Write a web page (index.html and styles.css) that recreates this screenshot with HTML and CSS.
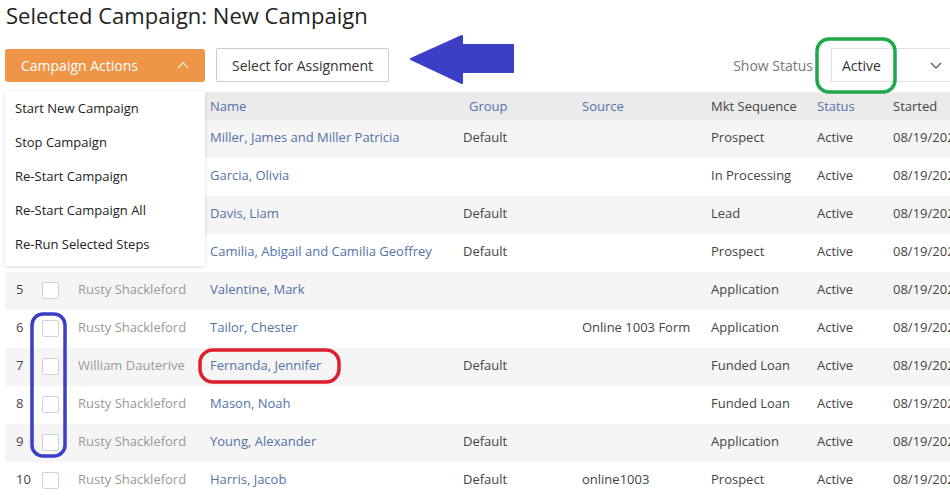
FILE: index.html
```html
<!DOCTYPE html>
<html lang="en">
<head>
  <meta charset="UTF-8">
  <title>Selected Campaign</title>
  <link rel="stylesheet" href="styles.css">
</head>
<body>
  <div class="page">
    <h1>Selected Campaign: New Campaign</h1>

    <div class="toolbar">
      <div class="actions">
        <button class="btn-orange">Campaign Actions
          <svg class="chev" width="12" height="8" viewBox="0 0 12 8"><path d="M1 7 L6 1.5 L11 7" fill="none" stroke="#fde3cc" stroke-width="1.3"/></svg>
        </button>
        <div class="menu">
          <div class="menu-item">Start New Campaign</div>
          <div class="menu-item">Stop Campaign</div>
          <div class="menu-item">Re-Start Campaign</div>
          <div class="menu-item">Re-Start Campaign All</div>
          <div class="menu-item">Re-Run Selected Steps</div>
        </div>
      </div>
      <button class="btn-plain">Select for Assignment</button>

      <div class="status-filter">
        <span class="label">Show Status</span>
        <div class="select">Active
          <svg width="12" height="7" viewBox="0 0 12 7"><path d="M1 1 L6 6 L11 1" fill="none" stroke="#555" stroke-width="1.2"/></svg>
        </div>
      </div>
    </div>

    <table class="grid">
      <colgroup>
        <col style="width:31px"><col style="width:34px"><col style="width:132px"><col style="width:253px">
        <col style="width:119px"><col style="width:129px"><col style="width:106px"><col style="width:76px"><col>
      </colgroup>
      <thead>
        <tr>
          <th></th><th></th><th></th>
          <th class="link">Name</th>
          <th class="link group-h">Group</th>
          <th class="link">Source</th>
          <th>Mkt Sequence</th>
          <th class="link">Status</th>
          <th>Started</th>
        </tr>
      </thead>
      <tbody>
        <tr><td class="num">1</td><td><span class="cb"></span></td><td class="who">Rusty Shackleford</td><td class="link">Miller, James and Miller Patricia</td><td>Default</td><td></td><td>Prospect</td><td>Active</td><td>08/19/2021</td></tr>
        <tr><td class="num">2</td><td><span class="cb"></span></td><td class="who">Rusty Shackleford</td><td class="link">Garcia, Olivia</td><td></td><td></td><td>In Processing</td><td>Active</td><td>08/19/2021</td></tr>
        <tr><td class="num">3</td><td><span class="cb"></span></td><td class="who">Rusty Shackleford</td><td class="link">Davis, Liam</td><td>Default</td><td></td><td>Lead</td><td>Active</td><td>08/19/2021</td></tr>
        <tr><td class="num">4</td><td><span class="cb"></span></td><td class="who">Rusty Shackleford</td><td class="link">Camilia, Abigail and Camilia Geoffrey</td><td>Default</td><td></td><td>Prospect</td><td>Active</td><td>08/19/2021</td></tr>
        <tr><td class="num">5</td><td><span class="cb"></span></td><td class="who">Rusty Shackleford</td><td class="link">Valentine, Mark</td><td></td><td></td><td>Application</td><td>Active</td><td>08/19/2021</td></tr>
        <tr><td class="num">6</td><td><span class="cb"></span></td><td class="who">Rusty Shackleford</td><td class="link">Tailor, Chester</td><td></td><td>Online 1003 Form</td><td>Application</td><td>Active</td><td>08/19/2021</td></tr>
        <tr><td class="num">7</td><td><span class="cb"></span></td><td class="who">William Dauterive</td><td class="link">Fernanda, Jennifer</td><td>Default</td><td></td><td>Funded Loan</td><td>Active</td><td>08/19/2021</td></tr>
        <tr><td class="num">8</td><td><span class="cb"></span></td><td class="who">Rusty Shackleford</td><td class="link">Mason, Noah</td><td></td><td></td><td>Funded Loan</td><td>Active</td><td>08/19/2021</td></tr>
        <tr><td class="num">9</td><td><span class="cb"></span></td><td class="who">Rusty Shackleford</td><td class="link">Young, Alexander</td><td>Default</td><td></td><td>Application</td><td>Active</td><td>08/19/2021</td></tr>
        <tr><td class="num">10</td><td><span class="cb"></span></td><td class="who">Rusty Shackleford</td><td class="link">Harris, Jacob</td><td>Default</td><td>online1003</td><td>Prospect</td><td>Active</td><td>08/19/2021</td></tr>
      </tbody>
    </table>
  </div>

  <!-- markup drawn on top of the screenshot -->
  <svg class="marks" width="950" height="500" viewBox="0 0 950 500">
    <path d="M411 59 L462 36 L462 45 L513 45 L513 72 L462 72 L462 83 Z" fill="#3a3fc6" stroke="#3a3fc6" stroke-width="2" stroke-linejoin="round"/>
    <rect x="817" y="39" width="78" height="53" rx="12" fill="none" stroke="#1fa84a" stroke-width="3.5"/>
    <rect x="32" y="314" width="33" height="142" rx="11" fill="none" stroke="#3a3fc6" stroke-width="3.5"/>
    <rect x="200" y="350" width="139" height="32" rx="13" fill="none" stroke="#dd1f2c" stroke-width="3.5"/>
  </svg>
</body>
</html>
```

FILE: styles.css
```css
html, body {
  margin: 0;
  overflow: hidden;
}

body {
  font-family: "Open Sans", Arial, sans-serif;
  color: #222;
  background: #fff;
  position: relative;
}

.page {
  width: 980px;
  box-sizing: border-box;
  padding-left: 5px;
}

h1 {
  margin: 0 0 18px 1px;
  font-size: 22px;
  font-weight: normal;
  line-height: 30px;
  color: #222;
}

.toolbar {
  display: flex;
  align-items: center;
  height: 34px;
  gap: 11px;
}

.actions {
  position: relative;
}

.btn-orange {
  display: flex;
  align-items: center;
  justify-content: space-between;
  width: 200px;
  height: 33px;
  padding: 0 16px 0 16px;
  border: none;
  border-radius: 3px;
  background-color: #ef9548;
  color: #fff;
  font-family: inherit;
  font-size: 14px;
}

.menu {
  position: absolute;
  top: 42px;
  left: 0;
  width: 200px;
  height: 175px;
  box-sizing: border-box;
  background: #fff;
  box-shadow: 0 1px 4px rgba(0,0,0,0.15);
  z-index: 5;
}

.menu-item {
  height: 34px;
  line-height: 34px;
  padding-left: 10px;
  font-size: 13px;
  color: #222;
}

.btn-plain {
  width: 173px;
  height: 34px;
  border: 1px solid #ccc;
  border-radius: 2px;
  background: #fff;
  color: #333;
  font-family: inherit;
  font-size: 14px;
}

.status-filter {
  margin-left: auto;
  display: flex;
  align-items: center;
  gap: 18px;
}

.status-filter .label {
  font-size: 14px;
  color: #777;
}

.select {
  display: flex;
  align-items: center;
  justify-content: space-between;
  width: 149px;
  height: 34px;
  box-sizing: border-box;
  padding: 0 37px 0 10px;
  border: 1px solid #e2e2e2;
  font-size: 14px;
  color: #333;
}

.grid {
  margin-top: 10px;
  width: 975px;
  border-collapse: collapse;
  table-layout: fixed;
  font-size: 13px;
}

.grid th {
  height: 28px;
  padding: 0 8px;
  background: #ebebeb;
  font-weight: normal;
  text-align: left;
  color: #444;
  white-space: nowrap;
}

.grid th.group-h {
  padding-left: 14px;
}

.grid td {
  height: 38px;
  box-sizing: border-box;
  padding: 0 8px 4px;
  color: #444;
  white-space: nowrap;
  overflow: hidden;
}

.grid tbody tr:nth-child(odd) td {
  background: #f5f5f5;
}

.grid .link {
  color: #5372a8;
}

.grid td.num {
  padding-left: 11px;
  padding-right: 0;
}

.grid td.who {
  color: #999;
}

.grid td:nth-child(2) {
  padding-left: 6px;
  padding-bottom: 2px;
}

.cb {
  display: block;
  width: 15px;
  height: 15px;
  border: 1px solid #d3d3d3;
  border-radius: 2px;
  background: #fff;
}

.marks {
  position: absolute;
  top: 0;
  left: 0;
  pointer-events: none;
  z-index: 10;
}
```
